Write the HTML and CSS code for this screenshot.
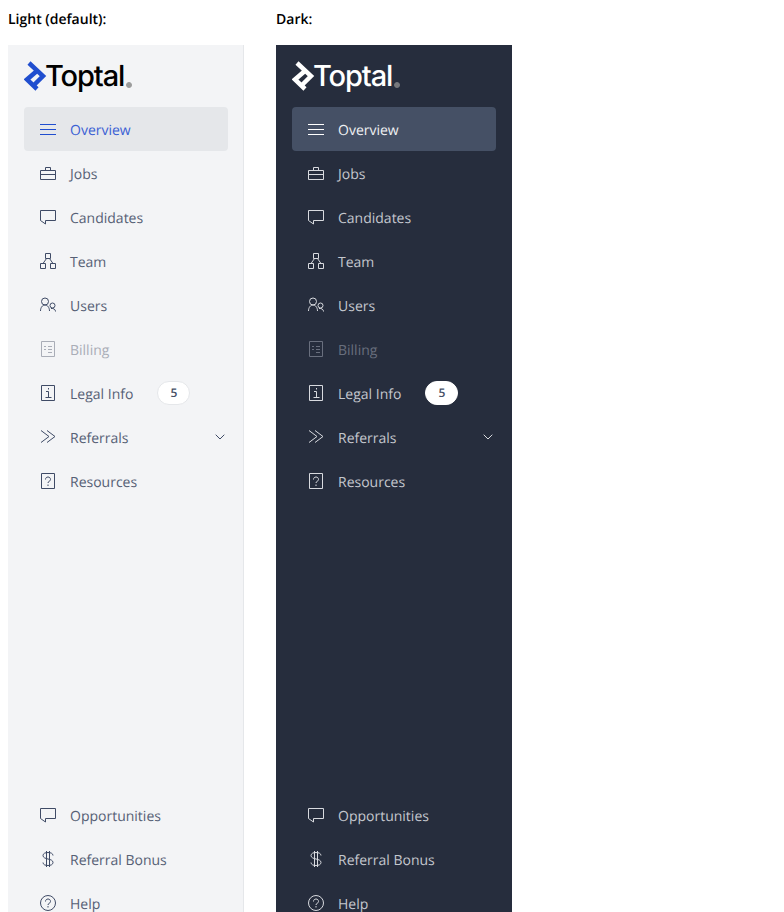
FILE: index.html
```html
<!DOCTYPE html>
<html lang="en">
<head>
<meta charset="utf-8">
<title>Sidebar variants</title>
<link rel="stylesheet" href="styles.css">
</head>
<body>
<svg class="defs" width="0" height="0" aria-hidden="true">
  <symbol id="i-menu" viewBox="0 0 16 16"><path d="M0 3.5h16M0 8.5h16M0 13.5h16"/></symbol>
  <symbol id="i-jobs" viewBox="0 0 16 16"><path d="M.5 5.5h15v9H.5zM.5 9.5h15M5.5 5.5v-3h5v3"/></symbol>
  <symbol id="i-chat" viewBox="0 0 16 16"><path d="M.5 1.5h15v10H5.5V15l-5-3.5z"/></symbol>
  <symbol id="i-team" viewBox="0 0 16 16"><path d="M5.5.5h5v5h-5zM.5 10.5h5v5h-5zM10.5 10.5h5v5h-5zM6.500 5.500L3 10.500M9.500 5.500l3.500 5"/></symbol>
  <symbol id="i-users" viewBox="0 0 16 16"><circle cx="5" cy="4.500" r="3.500"/><circle cx="12.500" cy="8.500" r="2.500"/><path d="M.5 14c0-3.500 2-6 4.500-6s4.500 2.500 4.500 6M11 11.500c2.500-.5 4.500 1 4.500 3"/></symbol>
  <symbol id="i-bill" viewBox="0 0 16 16"><path d="M1.500.5h13v15h-13zM4 5.500h2M8 5.500h4M4 8.500h2M8 8.500h4M8 11.500h4"/></symbol>
  <symbol id="i-info" viewBox="0 0 16 16"><path d="M1.500.5h13v15h-13zM6 6.500h2.500v6M5.500 12.500h6M8.500 3v1.500"/></symbol>
  <symbol id="i-ref" viewBox="0 0 16 16"><path d="M1 1.500l8 6-8 6M7 1.500l8 6-8 6"/></symbol>
  <symbol id="i-help" viewBox="0 0 16 16"><path d="M1.500.5h13v15h-13zM5.500 6.500c0-1.500 1-2.500 2.500-2.500s2.500 1 2.500 2.500c0 2-2.500 1.500-2.500 3.500M8 11.500V13"/></symbol>
  <symbol id="i-dollar" viewBox="0 0 16 16"><path d="M13 4.500c0-2-2.200-3-5-3s-5 1-5 3c0 4.500 10 2.500 10 7 0 2-2.200 3-5 3s-5-1-5-3M6.500 0v16M9.500 0v16"/></symbol>
  <symbol id="i-circle" viewBox="0 0 16 16"><circle cx="8" cy="8" r="7.500"/><path d="M5.500 6.500c0-1.500 1-2.500 2.500-2.500s2.500 1 2.500 2.500c0 2-2.500 1.500-2.500 3.500M8 11v1.500"/></symbol>
  <symbol id="i-chev" viewBox="0 0 10 6"><path d="M.7.7L5 5l4.300-4.300"/></symbol>
  <symbol id="i-mark" viewBox="1 0 24 30"><path d="M6 2l14 13-10 10M15 9L4 18.500 14 28"/></symbol>
</svg>
<main class="columns">
  <section class="variant">
    <h2 class="variant-title">Light (default):</h2>
    <nav class="sidebar sidebar-light">
      <div class="logo"><svg class="logo-mark"><use href="#i-mark"/></svg><span class="logo-text">Toptal</span><span class="logo-reg"></span></div>
      <ul class="menu">
        <li class="item item-active"><svg class="icon"><use href="#i-menu"/></svg><span class="label">Overview</span></li>
        <li class="item"><svg class="icon"><use href="#i-jobs"/></svg><span class="label">Jobs</span></li>
        <li class="item"><svg class="icon"><use href="#i-chat"/></svg><span class="label">Candidates</span></li>
        <li class="item"><svg class="icon"><use href="#i-team"/></svg><span class="label">Team</span></li>
        <li class="item"><svg class="icon"><use href="#i-users"/></svg><span class="label">Users</span></li>
        <li class="item item-disabled"><svg class="icon"><use href="#i-bill"/></svg><span class="label">Billing</span></li>
        <li class="item"><svg class="icon"><use href="#i-info"/></svg><span class="label">Legal Info</span><b class="badge">5</b></li>
        <li class="item"><svg class="icon"><use href="#i-ref"/></svg><span class="label">Referrals</span><svg class="chevron"><use href="#i-chev"/></svg></li>
        <li class="item"><svg class="icon"><use href="#i-help"/></svg><span class="label">Resources</span></li>
      </ul>
      <ul class="menu menu-bottom">
        <li class="item"><svg class="icon"><use href="#i-chat"/></svg><span class="label">Opportunities</span></li>
        <li class="item"><svg class="icon"><use href="#i-dollar"/></svg><span class="label">Referral Bonus</span></li>
        <li class="item"><svg class="icon"><use href="#i-circle"/></svg><span class="label">Help</span></li>
      </ul>
    </nav>
  </section>
  <section class="variant">
    <h2 class="variant-title">Dark:</h2>
    <nav class="sidebar sidebar-dark">
      <div class="logo"><svg class="logo-mark"><use href="#i-mark"/></svg><span class="logo-text">Toptal</span><span class="logo-reg"></span></div>
      <ul class="menu">
        <li class="item item-active"><svg class="icon"><use href="#i-menu"/></svg><span class="label">Overview</span></li>
        <li class="item"><svg class="icon"><use href="#i-jobs"/></svg><span class="label">Jobs</span></li>
        <li class="item"><svg class="icon"><use href="#i-chat"/></svg><span class="label">Candidates</span></li>
        <li class="item"><svg class="icon"><use href="#i-team"/></svg><span class="label">Team</span></li>
        <li class="item"><svg class="icon"><use href="#i-users"/></svg><span class="label">Users</span></li>
        <li class="item item-disabled"><svg class="icon"><use href="#i-bill"/></svg><span class="label">Billing</span></li>
        <li class="item"><svg class="icon"><use href="#i-info"/></svg><span class="label">Legal Info</span><b class="badge">5</b></li>
        <li class="item"><svg class="icon"><use href="#i-ref"/></svg><span class="label">Referrals</span><svg class="chevron"><use href="#i-chev"/></svg></li>
        <li class="item"><svg class="icon"><use href="#i-help"/></svg><span class="label">Resources</span></li>
      </ul>
      <ul class="menu menu-bottom">
        <li class="item"><svg class="icon"><use href="#i-chat"/></svg><span class="label">Opportunities</span></li>
        <li class="item"><svg class="icon"><use href="#i-dollar"/></svg><span class="label">Referral Bonus</span></li>
        <li class="item"><svg class="icon"><use href="#i-circle"/></svg><span class="label">Help</span></li>
      </ul>
    </nav>
  </section>
</main>
</body>
</html>
```
FILE: styles.css
```css
html, body { height: 912px; overflow: hidden; }
body { margin: 0; padding: 8px; box-sizing: border-box; background: #fff; font-family: "Open Sans", sans-serif; font-size: 14px; text-rendering: geometricPrecision; }
.defs { position: absolute; }
.columns { display: flex; gap: 32px; }
.variant { width: 236px; }
.variant-title { margin: 0 0 14px; padding-top: 1px; font-size: 14px; font-weight: 600; line-height: 22px; color: #000; }
.sidebar { height: 896px; box-sizing: border-box; padding: 14px 16px 16px; display: flex; flex-direction: column; }
.sidebar-light { background: #f3f4f6; box-shadow: inset -1px 0 0 #e5e7ea; color: #3f4b66; --text: #566075; --mark: #204ecf; --logo: #000; --active-bg: #e5e7ea; --active: #204ecf; --active-text: #3a60d4; --disabled: #a9adb7; --reg: #777; --badge-border: #e5e7ea; }
.sidebar-dark { background: #262d3d; color: #d8dadf; --text: #c4c7ce; --mark: #fff; --logo: #fff; --active-bg: #455065; --active: #fff; --active-text: #f0f1f3; --disabled: #696f7e; --reg: #999; --badge-border: #fff; }
.logo { height: 34px; margin-bottom: 14px; display: flex; align-items: center; }
.logo-mark { width: 24px; height: 30px; fill: none; stroke: var(--mark); stroke-width: 4.500; flex: none; margin-right: -2px; }
.logo-text { font-family: Inter, sans-serif; font-weight: 500; font-size: 29px; letter-spacing: -1.1px; line-height: 34px; margin-left: -1px; margin-top: -1px; color: var(--logo); }
.logo-reg { width: 6px; height: 6px; box-sizing: border-box; border-radius: 50%; border: 1px solid var(--reg); background: var(--reg); opacity: .7; margin: 17px 0 0 2px; }
.menu { list-style: none; margin: 0; padding: 0; }
.menu-bottom { margin-top: auto; }
.item { height: 44px; padding: 0 3px 0 16px; display: flex; align-items: center; gap: 14px; border-radius: 4px; line-height: 22px; }
.label { padding-top: 4px; color: var(--text); }
.item-active { background: var(--active-bg); color: var(--active); }
.item-active .label { color: var(--active-text); }
.item-disabled { color: var(--disabled); }
.item-disabled .label { color: var(--disabled); }
.icon { width: 16px; height: 16px; flex: none; fill: none; stroke: currentColor; stroke-width: 1; }
.chevron { width: 10px; height: 6px; margin-left: auto; fill: none; stroke: currentColor; stroke-width: 1; }
.badge { margin-left: 10px; width: 33px; height: 24px; box-sizing: border-box; border: 1px solid var(--badge-border); border-radius: 12px; background: #fff; color: #455065; font-size: 12px; font-weight: 600; line-height: 21px; text-align: center; }
```
